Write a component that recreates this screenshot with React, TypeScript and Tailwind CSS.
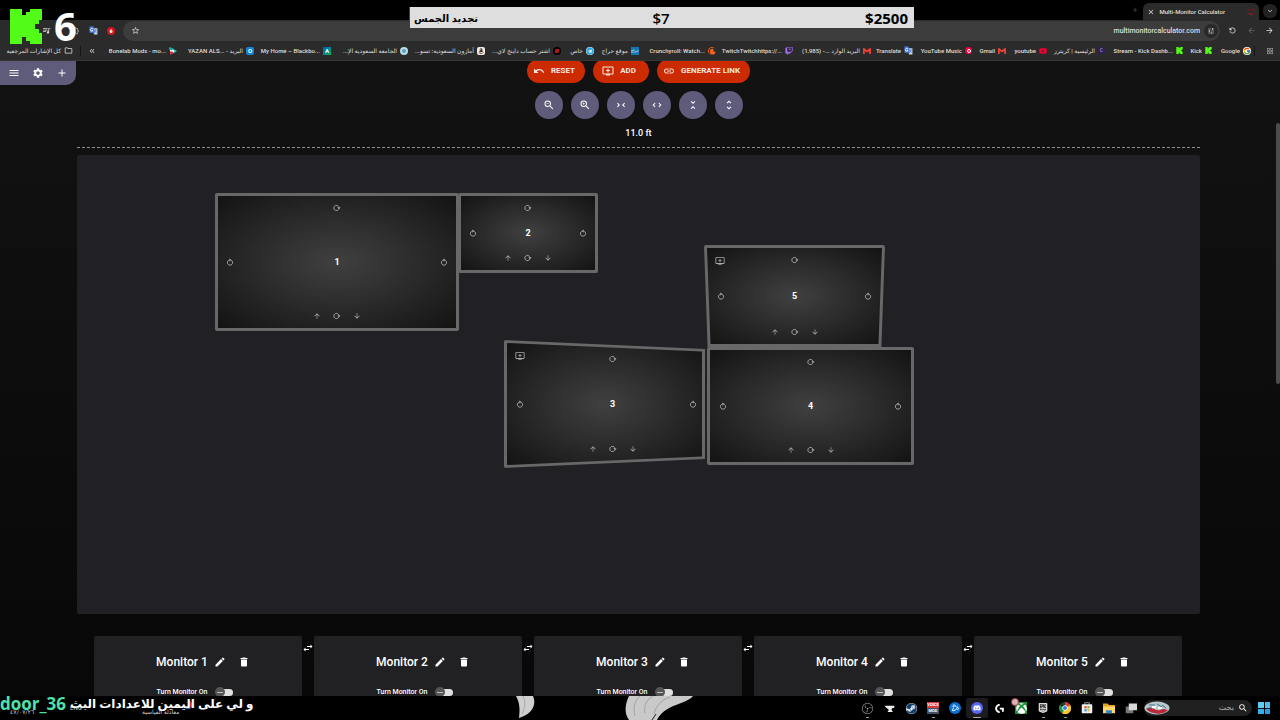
import React from "react";
import {
  MdAdd, MdArrowBack, MdArrowDownward, MdArrowForward, MdArrowUpward, MdClose, MdDelete, MdEdit,
  MdExpandMore, MdKeyboardDoubleArrowLeft, MdLink, MdMenu, MdOutlineAddToQueue, MdOutlineExtension,
  MdQueueMusic, MdRefresh, MdSearch, MdSettings, MdStarBorder, MdSwapHoriz, MdTune,
  MdUndo, MdUnfoldLess, MdUnfoldMore, MdZoomIn, MdZoomOut, MdFrontHand, MdOutlineFolder, MdGridView,
  MdMonitor,
} from "react-icons/md";
import {
  SiCrunchyroll, SiEpicgames, SiGmail, SiObsstudio, SiLogitechg, SiBattledotnet,
} from "react-icons/si";
import { FaAmazon, FaDiscord, FaSteam, FaTelegram, FaTwitch, FaXbox, FaYoutube } from "react-icons/fa";
import { FcGoogle } from "react-icons/fc";

function KickMark({ className }: { className: string }) {
  return (
    <svg viewBox="0 0 32 35" className={className} aria-hidden="true">
      <path fill="#53fc18" d="M0 0h12v6h4V3h4V0h12v11h-3v4h-4v5h4v4h3v11H20v-3h-4v-4h-4v7H0z" />
    </svg>
  );
}

function TranslateMark({ className }: { className: string }) {
  return (
    <svg viewBox="0 0 16 16" className={className} aria-hidden="true">
      <path fill="#c9d3e6" d="M6 4h9v11H9z" />
      <path fill="#4a80e8" d="M1 1h7l3 11H1z" />
      <path stroke="#fff" strokeWidth="1.4" fill="none" d="M7 5.5A2.5 2.5 0 1 0 7 8H5" />
      <path stroke="#4a6ea8" fill="none" d="M10 7h4M12 6v1c0 2-1 4-2 5M11 8l3 4" />
    </svg>
  );
}

function TurnIcon({ className }: { className: string }) {
  return (
    <svg viewBox="0 0 16 16" className={className} aria-hidden="true">
      <path fill="none" stroke="currentColor" strokeWidth="1.7" d="M5.500 4.600A5.200 5.200 0 1 0 10.500 4.600" />
      <path fill="currentColor" d="M6.500 1l4.500 3-4.500 3.200z" />
    </svg>
  );
}

type Bookmark = { label: string; width: string; rtl?: boolean; icon: React.ReactNode };

const bookmarks: Bookmark[] = [
  { label: "Google", width: "w-5", icon: <FcGoogle className="size-2 rounded-full bg-white" /> },
  { label: "Kick", width: "w-[11px]", icon: <KickMark className="size-[7px]" /> },
  { label: "Stream - Kick Dashb...", width: "w-[60px]", icon: <KickMark className="size-[7px]" /> },
  {
    label: "الرئيسية | كريترز", width: "w-10", rtl: true,
    icon: <span className="size-[7px] rounded-xs bg-[#2b2150] text-center text-[5px] leading-[7px] text-[#a08bd8]">C</span>,
  },
  { label: "youtube", width: "w-[22px]", icon: <FaYoutube className="size-2 text-[#f00033]" /> },
  { label: "Gmail", width: "w-[15px]", icon: <SiGmail className="size-2 text-[#ea4335]" /> },
  {
    label: "YouTube Music", width: "w-[41px]",
    icon: <span className="flex size-[7px] items-center justify-center rounded-full bg-[#f5003d]"><span className="size-1 rounded-full border border-white" /></span>,
  },
  { label: "Translate", width: "w-[22px]", icon: <TranslateMark className="size-[9px]" /> },
  { label: "البريد الوارد ...- (1,985)", width: "w-[59px]", rtl: true, icon: <SiGmail className="size-2 text-[#ea4335]" /> },
  { label: "TwitchTwitchhttps://...", width: "w-[58px]", icon: <FaTwitch className="size-2 text-[#a970ff]" /> },
  { label: "Crunchyroll: Watch...", width: "w-[58px]", icon: <SiCrunchyroll className="size-2 text-[#f4631e]" /> },
  {
    label: "موقع حراج", width: "w-[26px]", rtl: true,
    icon: <span className="size-2 bg-[#1277b5] text-center text-[4px] leading-2 text-white">حراج</span>,
  },
  { label: "خاص", width: "w-3.5", rtl: true, icon: <FaTelegram className="size-2 rounded-full bg-white text-[#2ca5e0]" /> },
  {
    label: "اشتر حساب داينج لاي...", width: "w-[57px]", rtl: true,
    icon: <span className="flex size-2 items-center justify-center rounded-full bg-black"><span className="size-1 -skew-x-12 bg-[#b3151c]" /></span>,
  },
  {
    label: "أمازون السعودية: تسو...", width: "w-[58px]", rtl: true,
    icon: <FaAmazon className="size-2 rounded-xs bg-[#f2eadf] p-px text-black" />,
  },
  {
    label: "الجامعة السعودية الإ...", width: "w-[58px]", rtl: true,
    icon: <span className="flex size-2 items-center justify-center rounded-full bg-[#b7dcea]"><span className="size-1 rounded-full bg-[#5a9fbe]" /></span>,
  },
  {
    label: "My Home – Blackbo...", width: "w-[58px]",
    icon: <span className="size-2 bg-linear-to-br from-[#1556c0] to-[#17b04c] text-center text-[6px] leading-2 font-bold text-white">A</span>,
  },
  {
    label: "YAZAN ALS... - البريد", width: "w-[58px]",
    icon: <span className="size-2 rounded-xs bg-[#1584d8] text-center text-[6px] leading-2 font-bold text-white">O</span>,
  },
  {
    label: "Bonelab Mods - mo...", width: "w-[57px]",
    icon: (
      <svg viewBox="0 0 16 16" className="size-2" aria-hidden="true">
        <path fill="#fff" d="M1 1 15 8 3 15z" />
        <path fill="#12a7a0" d="M1 0l8 3-3 4-5-2z" />
        <path fill="#d5203a" d="M2 9h5l2 3-6 4z" />
        <path fill="#10b9b0" d="M10 5l6 3-5 4z" />
      </svg>
    ),
  },
];

function Browser() {
  return (
    <header dir="rtl" className="shrink-0 bg-[#2b2b2b] text-[#dedede]">
      <div className="flex h-5 items-end bg-black ps-[3px]">
        <button aria-label="Search tabs" className="mb-0.5 flex size-[14px] items-center justify-center rounded-md bg-[#222]">
          <MdExpandMore className="size-2" />
        </button>
        <div className="ms-1 flex h-[17px] w-[116px] items-center rounded-t-md bg-[#2b2b2b] px-1">
          <MdMonitor className="size-2 text-[#7d1c22]" />
          <span dir="ltr" className="flex-1 pe-[22px] text-right text-[6px] leading-3 font-medium whitespace-nowrap">Multi-Monitor Calculator</span>
          <button aria-label="Close tab" className="ms-1"><MdClose className="size-2" /></button>
        </div>
        <button aria-label="New tab" className="ms-1 mb-1.5 text-[#555]"><MdAdd className="size-2" /></button>
      </div>
      <div className="flex h-[21px] items-center ps-1.5">
        <div className="flex w-[46px] items-center justify-between">
          <button aria-label="Forward"><MdArrowForward className="size-[9px]" /></button>
          <button aria-label="Back" className="text-[#666]"><MdArrowBack className="size-[9px]" /></button>
          <button aria-label="Reload"><MdRefresh className="size-[9px] -scale-x-100" /></button>
        </div>
        <div className="ms-2 flex h-5 flex-1 items-center rounded-full bg-[#3c3c3c] ps-0.5 pe-2">
          <button aria-label="Site information" className="flex size-3.5 items-center justify-center rounded-full bg-[#292929]">
            <MdTune className="size-2" />
          </button>
          <input
            dir="ltr"
            aria-label="Address"
            defaultValue="multimonitorcalculator.com"
            className="mx-1 min-w-0 flex-1 bg-transparent text-right text-[7px] leading-3 font-medium outline-none"
          />
          <button aria-label="Bookmark this page"><MdStarBorder className="size-[9px]" /></button>
        </div>
        <div className="flex w-[123px] items-center gap-[9px] ps-2">
          <span className="flex size-2 items-center justify-center rounded-full bg-[#d4141c]"><MdFrontHand className="size-1 text-white" /></span>
          <TranslateMark className="size-[9px]" />
          <MdOutlineExtension className="size-[9px] text-[#aaa]" />
          <MdQueueMusic className="ms-[11px] size-[9px]" />
        </div>
      </div>
      <nav aria-label="Bookmarks" className="flex h-5 items-center border-b border-[#363636] text-[6px] leading-3 font-medium">
        <div className="flex w-[29px] items-center justify-between ps-1.5 pe-[3px]">
          <MdGridView className="size-2 text-[#999]" />
          <span className="h-2.5 w-px bg-[#151515]" />
        </div>
        <div className="flex flex-1 gap-2">
          {bookmarks.map((b) => (
            <a key={b.label} href="#" className="flex shrink-0 items-center gap-[3px]">
              {b.icon}
              <span
                dir={b.rtl ? "rtl" : "ltr"}
                className={`${b.width} flex whitespace-nowrap ${b.rtl ? "justify-start" : "justify-end"}`}
              >
                {b.label}
              </span>
            </a>
          ))}
        </div>
        <div className="flex w-[96px] items-center gap-[7px]">
          <MdKeyboardDoubleArrowLeft className="size-2" />
          <span className="h-2.5 w-px bg-[#151515]" />
          <a href="#" className="flex items-center gap-[3px] whitespace-nowrap">
            <MdOutlineFolder className="size-[9px]" />
            كل الإشارات المرجعية
          </a>
        </div>
      </nav>
    </header>
  );
}

type Monitor = {
  id: number;
  box: string;
  clip: string;
  pads: string;
  lean: string;
  curved: boolean;
};

const monitors: Monitor[] = [
  { id: 1, box: "left-[138px] top-[38px] w-[244px] h-[138px]", clip: "", pads: "p-[11px]", lean: "", curved: false },
  { id: 2, box: "left-[381px] top-[38px] w-[140px] h-[80px]", clip: "", pads: "p-[11px]", lean: "", curved: false },
  {
    id: 3, box: "left-[427px] top-[185px] w-[201px] h-[128px]",
    clip: "[clip-path:polygon(0_0,100%_7%,100%_93%,0_100%)]", pads: "ps-3 pe-2 py-[15px]", lean: "ps-3", curved: true,
  },
  { id: 4, box: "left-[630px] top-[192px] w-[207px] h-[118px]", clip: "", pads: "px-3 py-[11px]", lean: "", curved: false },
  {
    id: 5, box: "left-[627px] top-[90px] w-[181px] h-[102px]",
    clip: "[clip-path:polygon(0_0,100%_0,98%_100%,2%_100%)]", pads: "px-[13px] py-[11px]", lean: "", curved: true,
  },
];

function MonitorNode({ id, box, clip, pads, lean, curved }: Monitor) {
  return (
    <div className={`absolute ${box}`}>
      <div className={`absolute inset-0 rounded-xs bg-[#686868] ${clip}`}>
        <div className={`absolute inset-[3px] bg-radial-[at_50%_50%] from-[#404040] via-[#2a2a2a] to-[#131313] ${clip}`} />
      </div>
      <div className={`absolute inset-0 flex flex-col items-center justify-between text-[#b0b0b0] ${pads}`}>
        <div className={`flex w-full justify-center ${lean}`}>
          <button aria-label={`Tilt monitor ${id} back`}><TurnIcon className="size-2 rotate-90" /></button>
        </div>
        <div className="flex w-full items-center justify-between">
          <button aria-label={`Turn monitor ${id} left`}><TurnIcon className="size-2" /></button>
          <span className={`text-[9px] leading-3 font-bold text-white ${lean}`}>{id}</span>
          <button aria-label={`Turn monitor ${id} right`}><TurnIcon className="size-2 -scale-x-100" /></button>
        </div>
        <div className={`flex w-full justify-center gap-3 ${lean}`}>
          <button aria-label={`Raise monitor ${id}`}><MdArrowUpward className="size-2" /></button>
          <button aria-label={`Tilt monitor ${id} forward`}><TurnIcon className="size-2 rotate-90" /></button>
          <button aria-label={`Lower monitor ${id}`}><MdArrowDownward className="size-2" /></button>
        </div>
      </div>
      {curved && <MdOutlineAddToQueue className="absolute top-[11px] left-[11px] size-2.5 text-[#aaa]" />}
    </div>
  );
}

function ActionButton({ icon, children }: { icon: React.ReactNode; children: React.ReactNode }) {
  return (
    <button className="flex h-6 min-w-14 items-center justify-center gap-1.5 rounded-full bg-[#cc2a00] ps-1.5 pe-2.5 text-[8px] leading-3 font-bold text-[#f5e6e2]">
      {icon}
      {children}
    </button>
  );
}

const viewTools = [
  { label: "Zoom out", icon: <MdZoomOut className="size-3" /> },
  { label: "Zoom in", icon: <MdZoomIn className="size-3" /> },
  { label: "Narrower", icon: <MdUnfoldLess className="size-3 rotate-90" /> },
  { label: "Wider", icon: <MdUnfoldMore className="size-3 rotate-90" /> },
  { label: "Shorter", icon: <MdUnfoldLess className="size-3" /> },
  { label: "Taller", icon: <MdUnfoldMore className="size-3" /> },
];

function MonitorCard({ id }: { id: number }) {
  return (
    <section className="flex h-24 w-52 flex-col items-center rounded-xs bg-[#212124] pt-[18px]">
      <div className="flex items-center ps-2.5">
        <h2 className="text-[12px] leading-4 font-medium whitespace-nowrap">Monitor {id}</h2>
        <button aria-label={`Rename monitor ${id}`} className="ms-1.5"><MdEdit className="size-3" /></button>
        <button aria-label={`Delete monitor ${id}`} className="ms-3"><MdDelete className="size-3" /></button>
      </div>
      <label className="me-1.5 mt-4 flex items-center gap-2 text-[7px] leading-3 font-medium whitespace-nowrap">
        Turn Monitor On
        <span className="relative flex h-2 w-[18px] items-center justify-end">
          <input type="checkbox" className="peer absolute inset-0 opacity-0" />
          <span className="h-[7px] w-3.5 rounded-full bg-[#e0e0e0]" />
          <span className="absolute left-0 flex size-2.5 items-center justify-center rounded-full bg-[#555]">
            <span className="h-px w-1.5 bg-[#bbb]" />
          </span>
        </span>
      </label>
    </section>
  );
}

function Page() {
  return (
    <main className="relative flex-1 overflow-hidden bg-linear-to-b from-[#121212] to-[#080808] text-white">
      <div className="absolute top-0 left-0 flex h-6 w-[76px] items-center justify-between rounded-br-[10px] bg-[#5f5b7b] px-2">
        <button aria-label="Menu"><MdMenu className="size-3" /></button>
        <button aria-label="Settings"><MdSettings className="size-3" /></button>
        <button aria-label="Add"><MdAdd className="size-3" /></button>
      </div>
      <div className="absolute top-[62px] right-0 h-[261px] w-1 rounded-full bg-[#4c4c4c]" />
      <div className="-mt-0.5 me-[3px] flex flex-col items-center">
        <div className="flex gap-2">
          <ActionButton icon={<MdUndo className="size-3" />}>RESET</ActionButton>
          <ActionButton icon={<MdOutlineAddToQueue className="size-3" />}>ADD</ActionButton>
          <ActionButton icon={<MdLink className="size-3" />}>GENERATE LINK</ActionButton>
        </div>
        <div className="mt-2 flex gap-2">
          {viewTools.map((t) => (
            <button key={t.label} aria-label={t.label} className="flex size-7 items-center justify-center rounded-full bg-[#5f5b7b]">
              {t.icon}
            </button>
          ))}
        </div>
        <p className="mt-2 text-[9px] leading-3 font-medium">11.0 ft</p>
      </div>
      <div className="ms-[77px] me-20">
        <div className="mt-2 h-px bg-[repeating-linear-gradient(90deg,#8f8f8f_0_3px,transparent_3px_5px)]" />
        <div className="relative mt-[7px] h-[459px] rounded-xs bg-[#212125]">
          {monitors.map((m) => (
            <MonitorNode key={m.id} {...m} />
          ))}
        </div>
      </div>
      <div className="me-1 mt-[22px] flex justify-center">
        {[1, 2, 3, 4, 5].map((id) => (
          <React.Fragment key={id}>
            {id > 1 && (
              <div className="flex w-3 justify-center pt-1.5">
                <button aria-label={`Swap monitors ${id - 1} and ${id}`} className="h-3"><MdSwapHoriz className="size-3" /></button>
              </div>
            )}
            <MonitorCard id={id} />
          </React.Fragment>
        ))}
      </div>
    </main>
  );
}

function TaskIcon({ children, running, active }: { children: React.ReactNode; running?: boolean; active?: boolean }) {
  return (
    <button className={`relative flex h-5 w-[22px] items-center justify-center rounded-xs ${active ? "bg-[#1c1c1e]" : ""}`}>
      {children}
      {running && <span className={`absolute bottom-0 h-px rounded-full bg-[#aaa] ${active ? "w-2" : "w-[3px]"}`} />}
    </button>
  );
}

function Taskbar() {
  return (
    <footer className="relative flex h-6 shrink-0 items-center justify-end bg-black pe-2.5 text-white">
      <div className="absolute top-0 left-0 text-[7px] leading-3 text-[#d0d0d0]">
        <span className="absolute top-2.5 left-2.5 text-[6px] whitespace-nowrap">٤٧/٠٧/٢٦</span>
        <span className="absolute top-1.5 left-[70px] text-[6px]">ENG</span>
        <span className="absolute top-2.5 left-[142px] text-[6px] whitespace-nowrap">معادلة القياسية</span>
        <span className="absolute top-[5px] left-[184px] size-2 rounded-full border-r-2 border-b-2 border-[#2b78d4] border-r-[#c82332]" />
      </div>
      <svg viewBox="0 0 184 24" className="absolute top-0 left-[514px] h-6 w-[184px]" aria-hidden="true">
        <path fill="#cfcfcf" d="M2 0h17c4 9-1 18-14 22 1-8 1-15-3-22z" />
        <path stroke="#a8a8a8" fill="none" d="M9 0c3 6 2 12-1 18" />
        <path fill="#c9c9c9" d="M115 0h64c-3 4-10 6-17 9-11 4-16 9-19 15h-28c-5-7-4-16 0-24z" />
        <path stroke="#a2a2a2" fill="none" d="M126 0c-6 5-7 12-5 20M139 0c-8 5-9 10-8 17M156 1c-9 3-14 9-16 17" />
        <path stroke="#222" fill="none" d="M138 24l4-6" />
      </svg>
      <nav aria-label="Taskbar" className="flex items-center">
        <TaskIcon running><SiObsstudio className="size-[11px] text-[#bbb]" /></TaskIcon>
        <TaskIcon>
          <svg viewBox="0 0 16 16" className="size-[11px]" aria-hidden="true">
            <path fill="#eee" d="M1 4h14v3c-3 0-4 1-4 3l2 3H5l2-3C6 8 3 8 1 4z" />
          </svg>
        </TaskIcon>
        <TaskIcon><FaSteam className="size-[11px] rounded-full bg-[#e8f0f7] text-[#10406e]" /></TaskIcon>
        <TaskIcon running>
          <span className="flex size-3 flex-col overflow-hidden text-center text-[4px] leading-[6px] font-bold">
            <span className="h-1.5 bg-[#d63a3a]">VOICE</span>
            <span className="h-1.5 bg-[#455060]">MOD</span>
          </span>
        </TaskIcon>
        <TaskIcon><SiBattledotnet className="size-3 rounded-full bg-[#0d6fd1] p-0.5 text-[#d9efff]" /></TaskIcon>
        <TaskIcon running active>
          <span className="flex size-3 items-center justify-center rounded-full bg-[#5865f2]"><FaDiscord className="size-2" /></span>
        </TaskIcon>
        <TaskIcon><SiLogitechg className="size-[9px]" /></TaskIcon>
        <TaskIcon>
          <span className="relative flex size-3 items-center justify-center bg-[#1c9137]">
            <FaXbox className="size-[11px]" />
            <span className="absolute -top-1 -left-1 size-2 rounded-full border border-[#a33a4a] bg-[#d7b3b3]" />
          </span>
        </TaskIcon>
        <TaskIcon running><SiEpicgames className="size-2.5 text-[#ddd]" /></TaskIcon>
        <TaskIcon running>
          <svg viewBox="0 0 16 16" className="size-3" aria-hidden="true">
            <path fill="#dc3c2f" d="M8 8V0a8 8 0 0 1 7 4z" />
            <path fill="#20964a" d="M8 8 4 15A8 8 0 0 1 1 4z" />
            <path fill="#f7c62a" d="M8 8l7-4a8 8 0 0 1-11 11z" />
            <path fill="#1d3f2a" d="M1 4a8 8 0 0 1 7-4v5z" />
            <circle cx="8" cy="8" r="3.6" fill="#fff" />
            <circle cx="8" cy="8" r="2.7" fill="#3c7de0" />
          </svg>
        </TaskIcon>
        <TaskIcon>
          <svg viewBox="0 0 16 16" className="size-3" aria-hidden="true">
            <path fill="none" stroke="#ccc" d="M5 4V1h6v3" />
            <rect x="1" y="3" width="14" height="12" rx="1" fill="#f0f0f0" />
            <path fill="#e6502e" d="M4.500 5.500h3v3h-3z" />
            <path fill="#7eb63a" d="M8.500 5.500h3v3h-3z" />
            <path fill="#2f9ee0" d="M4.500 9.500h3v3h-3z" />
            <path fill="#f4b62a" d="M8.500 9.500h3v3h-3z" />
          </svg>
        </TaskIcon>
        <TaskIcon>
          <svg viewBox="0 0 16 16" className="size-3" aria-hidden="true">
            <path fill="#e0a526" d="M0 2h6l2 2h8v10H0z" />
            <path fill="#ffd766" d="M0 6h16v9H0z" />
            <path fill="#2e86d6" d="M4 11h8v4H4z" />
          </svg>
        </TaskIcon>
        <TaskIcon>
          <svg viewBox="0 0 16 16" className="size-3" aria-hidden="true">
            <path fill="#777" d="M1 6h10v9H1z" />
            <path fill="#d8d8d8" d="M5 2h11v9H5z" />
          </svg>
        </TaskIcon>
      </nav>
      <label dir="rtl" className="me-0.5 flex h-4 w-[108px] items-center gap-1 rounded-full bg-[#202020] ps-1">
        <MdSearch className="size-2.5" />
        <input aria-label="بحث" placeholder="بحث" className="min-w-0 flex-1 bg-transparent text-[8px] leading-3 outline-none placeholder:text-[#b5b5b5]" />
        <svg viewBox="0 0 26 14" className="h-3.5 w-[26px]" aria-hidden="true">
          <ellipse cx="13" cy="7" rx="12.500" ry="6.500" fill="#b9c8cd" />
          <path fill="#b82838" d="M2 8c5-4 10 3 14 1s6 0 8 0c-4 5-17 5-22-1z" />
          <path fill="none" stroke="#3c6f86" d="M5 4h6M13 3l5 3M4 7h4M18 4l4 3" />
          <path fill="#fff" d="M8 5h4v2H8zM14 6h4v2h-4z" />
        </svg>
      </label>
      <button aria-label="Start" className="ms-1.5 grid size-3 grid-cols-2 gap-px">
        <span className="bg-[#5ccbf5]" /><span className="bg-[#4abdf0]" />
        <span className="bg-[#32aeea]" /><span className="bg-[#1f9fe4]" />
      </button>
    </footer>
  );
}

function StreamOverlay() {
  return (
    <>
      <div className="absolute top-2 left-0 flex h-9 items-center gap-3 ps-2.5">
        <KickMark className="h-[35px] w-8" />
        <span className="font-['Open_Sans',sans-serif] text-[40px] leading-9 font-bold text-white">6</span>
      </div>
      <div className="absolute top-[7px] left-[409px] grid h-[21px] w-[505px] grid-cols-3 items-center border-l border-[#b01020] bg-[#dedede] ps-1 pe-1.5 font-['Open_Sans','DejaVu_Sans',sans-serif] text-[15px] leading-5 text-black">
        <span dir="rtl" className="text-left text-[10px] font-bold">تجديد الجمس</span>
        <span className="text-center font-semibold">$7</span>
        <span className="text-right font-bold">$2500</span>
      </div>
      <p className="absolute bottom-1.5 left-0 flex items-center gap-1 font-['Open_Sans','DejaVu_Sans',sans-serif] text-[17px] leading-5 font-bold whitespace-nowrap text-white">
        <span className="text-[#4fe0ae]">door_36</span>
        <span dir="rtl" className="text-[12px]">و لي على اليمين للاعدادات البث</span>
      </p>
    </>
  );
}

export default function App() {
  return (
    <div className="relative flex h-screen flex-col overflow-hidden bg-black font-['Roboto','DejaVu_Sans',sans-serif]">
      <Browser />
      <Page />
      <Taskbar />
      <StreamOverlay />
    </div>
  );
}
